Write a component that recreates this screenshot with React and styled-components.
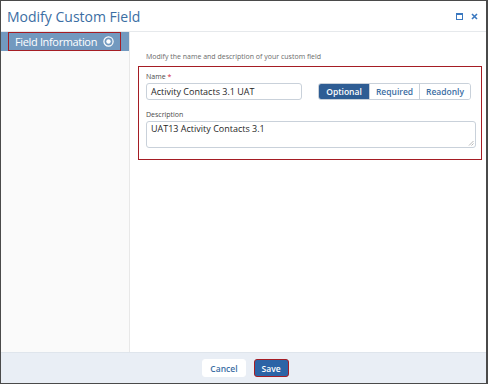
import React from "react";
import styled, { createGlobalStyle } from "styled-components";

const Global = createGlobalStyle`
  html, body { margin: 0; padding: 0; background: #fff; }
  body { font-family: "Open Sans", "Noto Sans", sans-serif; }
  * { box-sizing: border-box; }
`;

const Window = styled.div`
  width: 488px;
  height: 384px;
  display: flex;
  flex-direction: column;
  border: 1px solid #4a4a4a;
  border-right-width: 2px;
  background: #fff;
`;

const Header = styled.div`
  height: 31px;
  flex: none;
  display: flex;
  align-items: center;
  justify-content: space-between;
  padding: 0 8px 0 6px;
  border-bottom: 1px solid #e6e9ec;
`;

const Title = styled.div`
  font-size: 14px;
  color: #3b6ea3;
`;

const HeaderIcons = styled.div`
  display: flex;
  gap: 8px;
  align-items: center;
  padding-top: 1px;
`;

const Body = styled.div`
  flex: 1;
  display: flex;
  min-height: 0;
`;

const Sidebar = styled.div`
  width: 129px;
  flex: none;
  background: #fafafa;
  border-right: 1px solid #e8e8e8;
`;

const Tab = styled.div`
  height: 19px;
  background: #7299bf;
  padding: 0 8px 0 7px;
  display: flex;
`;

const TabInner = styled.div`
  flex: 1;
  min-width: 0;
  display: flex;
  align-items: center;
  justify-content: space-between;
  border: 1.5px solid #a51d24;
  padding: 0 6px 0 6px;
  color: #fff;
  font-size: 11px;
  letter-spacing: -0.35px;
  white-space: nowrap;
`;

const Content = styled.div`
  flex: 1;
  padding: 20px 6px 0 8px;
`;

const Intro = styled.div`
  font-size: 7px;
  color: #6b6b6b;
  padding-left: 8px;
  margin-bottom: 4px;
  line-height: 10px;
`;

const FieldBox = styled.div`
  border: 1.5px solid #a51d24;
  padding: 5px 5px 11px 7px;
  display: flex;
  flex-direction: column;
`;

const Label = styled.div`
  font-size: 7px;
  color: #4a4a4a;
  line-height: 10px;
  margin-bottom: 1px;
`;

const Req = styled.span`
  color: #d0213a;
  margin-left: 2px;
`;

const Row = styled.div`
  display: flex;
  align-items: center;
  justify-content: space-between;
  padding-right: 5px;
  margin-bottom: 10px;
`;

const Input = styled.div`
  width: 156px;
  height: 17px;
  border: 1px solid #c9d1da;
  border-radius: 3px;
  font-size: 9px;
  color: #1f1f1f;
  display: flex;
  align-items: center;
  padding-left: 4px;
`;

const Segmented = styled.div`
  display: flex;
  height: 17px;
  border: 1px solid #c9d1da;
  border-radius: 3px;
  overflow: hidden;
`;

const Seg = styled.div`
  width: ${(p) => p.$w}px;
  display: flex;
  align-items: center;
  justify-content: center;
  font-size: 8.5px;
  font-weight: 600;
  color: ${(p) => (p.$active ? "#fff" : "#3b6ea3")};
  background: ${(p) => (p.$active ? "#2e5d94" : "#fff")};
  & + & { border-left: 1px solid #c9d1da; }
`;

const TextArea = styled.div`
  position: relative;
  width: 330px;
  height: 27px;
  border: 1px solid #c9d1da;
  border-radius: 3px;
  font-size: 9px;
  color: #1f1f1f;
  padding: 1px 4px;
  line-height: 12px;
`;

const Grip = styled.svg`
  position: absolute;
  right: 1px;
  bottom: 1px;
`;

const Footer = styled.div`
  height: 31px;
  flex: none;
  background: #e9eef5;
  border-top: 1px solid #dfe5ec;
  display: flex;
  align-items: center;
  justify-content: center;
  gap: 8px;
  padding-left: 4px;
`;

const Button = styled.div`
  height: 18px;
  padding: 0 7px;
  display: flex;
  align-items: center;
  border-radius: 3px;
  font-size: 8.5px;
  font-weight: 600;
  color: ${(p) => (p.$primary ? "#fff" : "#3b6ea3")};
  background: ${(p) => (p.$primary ? "#2c64a6" : "#fff")};
  border: 1px solid ${(p) => (p.$primary ? "#a51d24" : "#fff")};
`;

export default function App() {
  return (
    <>
      <Global />
      <Window>
        <Header>
          <Title>Modify Custom Field</Title>
          <HeaderIcons>
            <svg width="7" height="7" viewBox="0 0 7 7">
              <rect x="0.5" y="0.5" width="6" height="6" fill="none" stroke="#3a78c0" strokeWidth="1" />
              <rect x="0" y="0" width="7" height="2" fill="#3a78c0" />
            </svg>
            <svg width="7" height="7" viewBox="0 0 7 7">
              <path d="M1 1 L6 6 M6 1 L1 6" stroke="#3a78c0" strokeWidth="1.6" />
            </svg>
          </HeaderIcons>
        </Header>
        <Body>
          <Sidebar>
            <Tab>
              <TabInner>
                <span>Field Information</span>
                <svg width="11" height="11" viewBox="0 0 11 11">
                  <circle cx="5.5" cy="5.5" r="4.6" fill="none" stroke="#fff" strokeWidth="1.2" />
                  <circle cx="5.5" cy="5.5" r="2.2" fill="#fff" />
                </svg>
              </TabInner>
            </Tab>
          </Sidebar>
          <Content>
            <Intro>Modify the name and description of your custom field</Intro>
            <FieldBox>
              <Label>
                Name<Req>*</Req>
              </Label>
              <Row>
                <Input>Activity Contacts 3.1 UAT</Input>
                <Segmented>
                  <Seg $w={50} $active>Optional</Seg>
                  <Seg $w={50}>Required</Seg>
                  <Seg $w={51}>Readonly</Seg>
                </Segmented>
              </Row>
              <Label>Description</Label>
              <TextArea>
                UAT13 Activity Contacts 3.1
                <Grip width="6" height="6" viewBox="0 0 6 6">
                  <path d="M5.5 1 L1 5.5 M5.5 3.5 L3.5 5.5" stroke="#999" strokeWidth="0.7" />
                </Grip>
              </TextArea>
            </FieldBox>
          </Content>
        </Body>
        <Footer>
          <Button>Cancel</Button>
          <Button $primary>Save</Button>
        </Footer>
      </Window>
    </>
  );
}
